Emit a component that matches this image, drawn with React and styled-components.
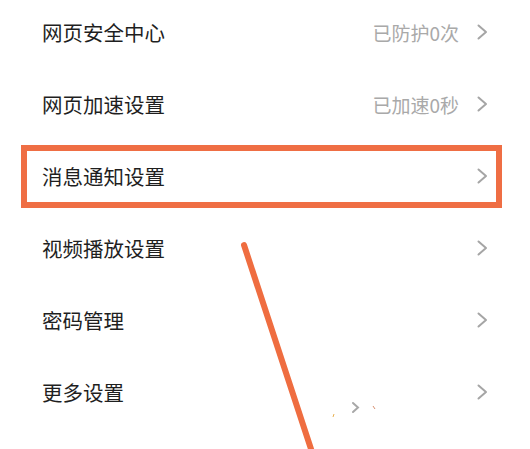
import React from "react";
import styled, { createGlobalStyle } from "styled-components";

const GlobalStyle = createGlobalStyle`
  html, body {
    margin: 0;
    padding: 0;
    background: #fff;
  }
  body {
    font-family: "Noto Sans CJK SC", "Noto Sans", sans-serif;
  }
`;

const items = [
  { title: "网页安全中心", note: "已防护0次" },
  { title: "网页加速设置", note: "已加速0秒" },
  { title: "消息通知设置", marked: true },
  { title: "视频播放设置" },
  { title: "密码管理" },
  { title: "更多设置" },
];

const App = () => {
  return (
    <Page>
      <GlobalStyle />
      <List>
        {items.map((item) => (
          <Row key={item.title}>
            <RowInner marked={item.marked}>
              <Title>{item.title}</Title>
              {item.note && <Note>{item.note}</Note>}
              <Chevron />
            </RowInner>
          </Row>
        ))}
      </List>
      <Arrow />
    </Page>
  );
};

export default App;

const Chevron = () => (
  <ChevronSvg width="11" height="16" viewBox="0 0 11 16">
    <path d="M1.5 1.5 L9 8 L1.5 14.5" fill="none" stroke="#a5a5a5" strokeWidth="2" strokeLinecap="round" strokeLinejoin="round" />
  </ChevronSvg>
);

// hand-drawn annotation stroke over the list
const Arrow = () => (
  <ArrowSvg width="530" height="449" viewBox="0 0 530 449">
    <line x1="244" y1="245" x2="312" y2="452" stroke="#ef6d40" strokeWidth="6" strokeLinecap="round" />
    <path d="M353 403 L358 407.5 L353 412" fill="none" stroke="#a8a8a8" strokeWidth="2" strokeLinecap="round" />
    <path d="M333 417 L334 414" stroke="#e8b050" strokeWidth="1" />
    <path d="M373 406 L375 409" stroke="#d89070" strokeWidth="1" />
  </ArrowSvg>
);

const Page = styled.div`
  position: relative;
  width: 530px;
  height: 449px;
  overflow: hidden;
  background: #fff;
`;

const List = styled.div`
  display: flex;
  flex-direction: column;
  margin-top: -5px;
`;

const Row = styled.div`
  height: 72px;
  display: flex;
  align-items: center;
  padding: 0 28px 0 21px;
`;

const RowInner = styled.div`
  flex: 1;
  height: 63px;
  box-sizing: border-box;
  display: flex;
  align-items: center;
  padding: 0 8px 0 15px;
  border: 6px solid ${({ marked }) => (marked ? "#ef6e44" : "transparent")};
  margin-top: 2px;
`;

const Title = styled.div`
  flex: 1;
  font-size: 20.5px;
  color: #1f1f1f;
  line-height: 1;
`;

const Note = styled.div`
  font-size: 19px;
  color: #a9a9a9;
  margin-right: 18px;
  line-height: 1;
`;

const ChevronSvg = styled.svg`
  display: block;
  flex-shrink: 0;
`;

const ArrowSvg = styled.svg`
  position: absolute;
  left: 0;
  top: 0;
  pointer-events: none;
`;
